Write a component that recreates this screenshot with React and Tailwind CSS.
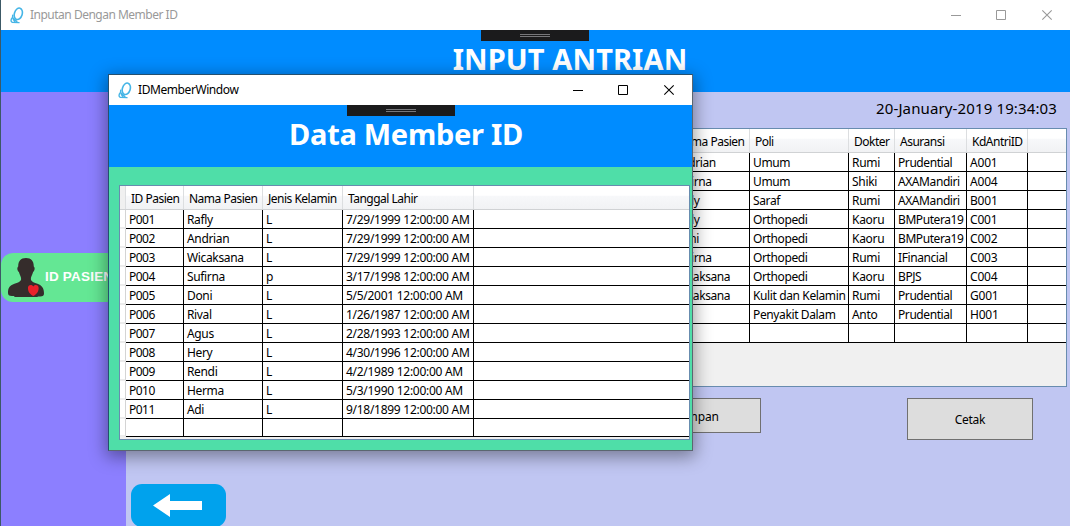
import React from "react";

const members = [
  ["P001", "Rafly", "L", "7/29/1999 12:00:00 AM"],
  ["P002", "Andrian", "L", "7/29/1999 12:00:00 AM"],
  ["P003", "Wicaksana", "L", "7/29/1999 12:00:00 AM"],
  ["P004", "Sufirna", "p", "3/17/1998 12:00:00 AM"],
  ["P005", "Doni", "L", "5/5/2001 12:00:00 AM"],
  ["P006", "Rival", "L", "1/26/1987 12:00:00 AM"],
  ["P007", "Agus", "L", "2/28/1993 12:00:00 AM"],
  ["P008", "Hery", "L", "4/30/1996 12:00:00 AM"],
  ["P009", "Rendi", "L", "4/2/1989 12:00:00 AM"],
  ["P010", "Herma", "L", "5/3/1990 12:00:00 AM"],
  ["P011", "Adi", "L", "9/18/1899 12:00:00 AM"],
  ["", "", "", ""],
];

const queue = [
  ["Andrian", "Umum", "Rumi", "Prudential", "A001"],
  ["Sufirna", "Umum", "Shiki", "AXAMandiri", "A004"],
  ["Rafly", "Saraf", "Rumi", "AXAMandiri", "B001"],
  ["Rafly", "Orthopedi", "Kaoru", "BMPutera19", "C001"],
  ["Doni", "Orthopedi", "Kaoru", "BMPutera19", "C002"],
  ["Sufirna", "Orthopedi", "Rumi", "IFinancial", "C003"],
  ["Wicaksana", "Orthopedi", "Kaoru", "BPJS", "C004"],
  ["Wicaksana", "Kulit dan Kelamin", "Rumi", "Prudential", "G001"],
  ["", "Penyakit Dalam", "Anto", "Prudential", "H001"],
  ["", "", "", "", ""],
];

function AppIcon() {
  return (
    <svg className="h-[17px] w-[14px] shrink-0" viewBox="0 0 14 17" fill="none" stroke="#45b5e6" strokeLinecap="round">
      <ellipse cx="8.300" cy="6.800" rx="3.900" ry="5.900" transform="rotate(17 8.300 6.800)" strokeWidth="1.600" />
      <path d="M2.700 8.200 2.500 10.600 6.800 14.600M2.500 10.600C.7 12.300.6 14.500 2 15.200L9 15.600M3.300 12.600 4.600 14" strokeWidth="1.400" />
    </svg>
  );
}

function Controls({ className }) {
  return (
    <svg className={`ml-auto h-[29px] w-[138px] shrink-0 ${className}`} viewBox="0 0 138 29" fill="none" stroke="currentColor">
      <path d="M18 14.500h10" />
      <path d="M63.500 9.500h9v9h-9z" />
      <path d="m109.300 9.300 9.400 9.400m0-9.400-9.400 9.400" strokeWidth="1.100" />
    </svg>
  );
}

function Handle({ className }) {
  return (
    <div className={`flex h-[11px] w-[108px] shrink-0 flex-col items-center gap-px bg-[#1b1b1c] pt-1 ${className}`}>
      <div className="h-px w-[30px] bg-[#77777a]" />
      <div className="h-px w-[30px] bg-[#77777a]" />
    </div>
  );
}

function HeadCell({ children, className }) {
  return (
    <div className={`flex h-full shrink-0 items-center overflow-hidden border-r border-[#dcdee0] pt-[2px] pl-[5px] tracking-[-0.5px] whitespace-nowrap ${className}`}>
      {children}
    </div>
  );
}

function Cell({ children, className }) {
  return (
    <div className={`flex h-full shrink-0 items-center overflow-hidden border-r border-black pt-[2px] pl-[3px] whitespace-nowrap ${className}`}>
      {children}
    </div>
  );
}

function QueueGrid() {
  const w = ["w-[79px]", "w-[99px]", "w-[46px]", "w-[72px]", "w-[61px]"];
  const t = ["tracking-[-0.4px]", "tracking-[-0.38px]", "tracking-[-0.3px]", "tracking-[-0.42px]", "tracking-[-0.2px]"];
  return (
    <div className="ml-auto flex h-[259px] w-[397px] flex-col border border-[#688caf] bg-[#f0f0f0] text-[12px]">
      <div className="flex h-6 shrink-0 border-b border-[#d0d2d4] bg-linear-to-b from-white from-40% via-[#f7f8fa] via-45% to-[#f1f2f4]">
        {["Nama Pasien", "Poli", "Dokter", "Asuransi", "KdAntriID"].map((h, i) => (
          <HeadCell key={h} className={w[i]}>{h}</HeadCell>
        ))}
      </div>
      {queue.map((r, n) => (
        <div key={n} className="flex h-[19px] shrink-0 border-b border-black bg-white">
          {r.map((c, i) => (
            <Cell key={i} className={`${w[i]} ${t[i]}`}>{c}</Cell>
          ))}
        </div>
      ))}
    </div>
  );
}

function MemberGrid() {
  const w = ["w-[58px]", "w-[79px]", "w-[80px]", "w-[131px]"];
  const t = ["tracking-[-0.5px]", "tracking-[-0.35px]", "tracking-[-0.15px]", "tracking-[-0.28px]"];
  return (
    <div className="mt-[18px] ml-[10px] flex h-[255px] w-[571px] flex-col border border-[#688caf] bg-[#f0f0f0] text-[12px]">
      <div className="flex h-6 shrink-0 border-b border-[#d0d2d4] bg-linear-to-b from-white from-40% via-[#f7f8fa] via-45% to-[#f1f2f4]">
        <div className="w-[6px] shrink-0 border-r border-[#dcdee0] bg-[#f0f0f0]" />
        {["ID Pasien", "Nama Pasien", "Jenis Kelamin", "Tanggal Lahir"].map((h, i) => (
          <HeadCell key={h} className={w[i]}>{h}</HeadCell>
        ))}
      </div>
      {members.map((r, n) => (
        <div key={n} className="flex h-[19px] shrink-0 bg-white last:h-[18px]">
          <div className="w-[6px] shrink-0 border-r border-b-2 border-r-[#d4d4d4] border-b-[#ececec]" />
          <div className="flex grow border-b border-black">
            {r.map((c, i) => (
              <Cell key={i} className={`${w[i]} ${t[i]}`}>{c}</Cell>
            ))}
          </div>
        </div>
      ))}
    </div>
  );
}

function MemberWindow() {
  return (
    <div className="absolute top-[74px] left-[107px] h-[377px] w-[585px] border border-[#24506f] border-r-[#5b6670] border-b-[#5b6670] bg-[#4fdea8] shadow-[0_4px_16px_2px_rgba(0,0,0,0.38)]">
      <div className="flex h-[30px] items-center bg-white pl-[9px] text-[12px]">
        <AppIcon />
        <span className="ml-[6px] tracking-[-0.42px] whitespace-nowrap">IDMemberWindow</span>
        <Controls className="mr-[-1px] text-black" />
      </div>
      <div className="flex h-[62px] flex-col items-center bg-[#008cff]">
        <Handle />
        <h2 className="mt-[-1px] mr-[-11px] text-[29px] leading-[38px] font-bold tracking-[-0.28px] whitespace-nowrap text-white">Data Member ID</h2>
      </div>
      <MemberGrid />
    </div>
  );
}

function PatientButton() {
  return (
    <button className="mt-[161px] flex h-[49px] w-[125px] items-center overflow-hidden rounded-[12px] bg-[#64e794] pl-[7px]">
      <svg className="h-[39px] w-[36px] shrink-0" viewBox="0 0 37 39" preserveAspectRatio="none">
        <path fill="#352c2b" d="M18.500 0c5.500 0 8 3 8 8.500 1.500 1 1 4.500-.7 5.500-.8 3-2.300 4.500-2.300 7 0 3 4 3.500 8.500 5.500 4 2 5 5 5 9 0 2-1 3-4 3H31l-1 .5H7L6 38H4c-3 0-4-1-4-3 0-5 1.500-7 5-8.500 4.500-2 8.500-2.500 8.500-5.500 0-2.500-1.500-4-2.300-7-1.700-1-2.200-4.500-.7-5.500 0-5.500 2.500-8.500 8-8.500Z" />
        <path fill="#e9202a" d="M26 38c-3-1.500-5.500-4-5.500-8 0-3 3.500-4 5.500-1.500 2-2.500 5.500-1.500 5.500 1.500 0 4-2.500 6.500-5.500 8Z" />
      </svg>
      <span className="ml-[1px] font-['Liberation_Sans',sans-serif] text-[13.5px] font-bold tracking-[0.2px] whitespace-nowrap text-white">ID PASIEN</span>
    </button>
  );
}

export default function App() {
  return (
    <div className="relative flex h-[526px] w-[1070px] flex-col overflow-hidden border-l border-[#3c5966] bg-white font-['Noto_Sans','Open_Sans',sans-serif] text-black">
      <div className="flex h-[30px] shrink-0 items-center bg-white pl-[9px] text-[12px] text-[#999999]">
        <AppIcon />
        <span className="ml-[6px] tracking-[-0.5px] whitespace-nowrap">Inputan Dengan Member ID</span>
        <Controls className="mr-[-1px] text-[#999999]" />
      </div>
      <div className="flex h-[62px] shrink-0 flex-col items-center bg-[#008cff]">
        <Handle className="mr-[2px]" />
        <h1 className="mt-[-1px] mr-[-69px] text-[29px] leading-[38px] font-bold tracking-[0.1px] whitespace-nowrap text-white">INPUT ANTRIAN</h1>
      </div>
      <div className="flex grow">
        <aside className="w-[125px] shrink-0 bg-[#8c7fff]">
          <PatientButton />
        </aside>
        <main className="flex grow flex-col bg-[#c0c6f2] pr-[3px]">
          <div className="flex h-9 shrink-0 items-center justify-end pr-[10px] pb-[3px] text-[15px] tracking-[0.13px]">20-January-2019 19:34:03</div>
          <QueueGrid />
          <div className="mt-[11px] flex items-start justify-end pr-[34px] text-[12px]">
            <button className="mr-[146px] h-[35px] w-[126px] border border-[#707070] bg-[#dddddd] pt-[2px] tracking-[-0.1px]">Simpan</button>
            <button className="h-[42px] w-[126px] border border-[#707070] bg-[#dddddd] pt-[2px] tracking-[-0.3px]">Cetak</button>
          </div>
          <button className="mt-[44px] ml-[5px] flex h-[43px] w-[95px] shrink-0 items-center justify-center rounded-[11px] bg-[#00a2ed] pr-[2px]">
            <svg className="h-[23px] w-[49px]" viewBox="0 0 49 23" fill="white">
              <path d="M0 11.500 17 0v7h32v9H17v7Z" />
            </svg>
          </button>
        </main>
      </div>
      <MemberWindow />
    </div>
  );
}
